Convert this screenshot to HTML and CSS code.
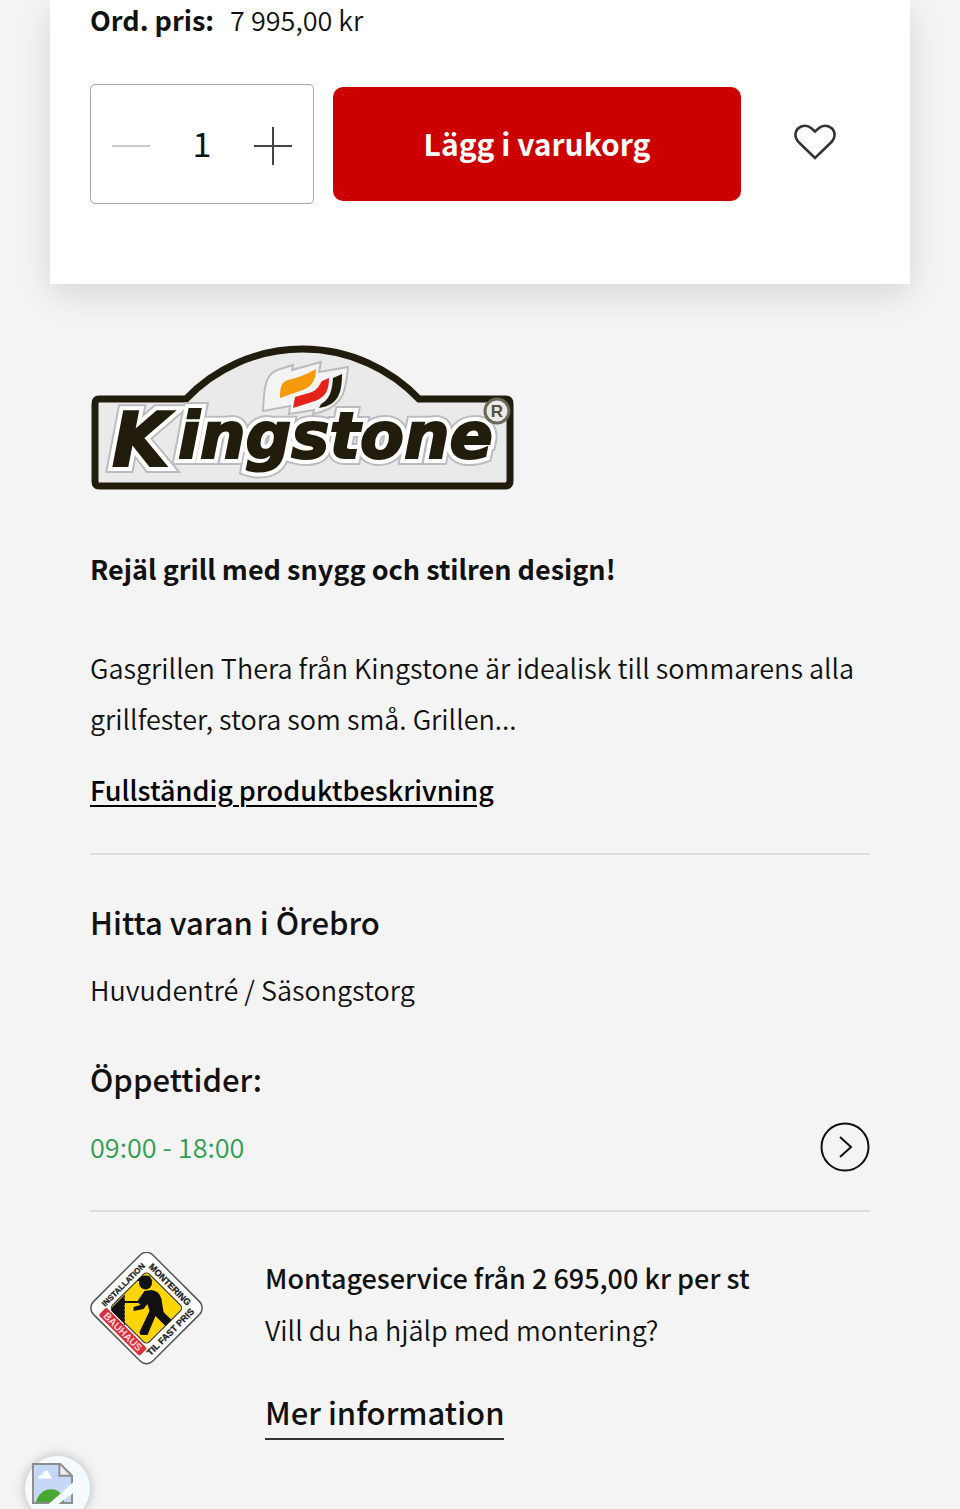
FILE: index.html
```html
<!DOCTYPE html>
<html lang="sv">
<head>
    <meta charset="UTF-8">
    <meta name="viewport" content="width=device-width, initial-scale=1.0">
    <title>Gasgrill Thera</title>
    <link rel="stylesheet" href="styles.css">
</head>
<body>
    <main class="page">
        <section class="card">
            <p class="price"><strong>Ord. pris:</strong> <span>7 995,00 kr</span></p>
            <form class="buy">
                <div class="qty">
                    <button type="button" class="qty_btn" aria-label="Minska" disabled>
                        <svg width="38" height="38" viewBox="0 0 38 38"><path d="M0 19H38"/></svg>
                    </button>
                    <input type="text" class="qty_input" value="1" aria-label="Antal">
                    <button type="button" class="qty_btn" aria-label="Öka">
                        <svg width="38" height="38" viewBox="0 0 38 38"><path d="M0 19H38M19 0V38"/></svg>
                    </button>
                </div>
                <button type="button" class="add">Lägg i varukorg</button>
                <button type="button" class="wish" aria-label="Spara som favorit">
                    <svg width="42" height="36" viewBox="0 0 42 36"><path d="M21 34L4.500 18C0.500 14 0.500 8 4 4.500C8 0.800 13.500 1 17 4L21 7.500L25 4C28.500 1 34 0.800 38 4.500C41.500 8 41.500 14 37.500 18Z"/></svg>
                </button>
            </form>
        </section>

        <section class="info">
            <!-- Kingstone -->
            <svg class="brand" width="424" height="147" viewBox="0 0 424 147" role="img" aria-label="Kingstone">
                <path d="M9 55H96A161 161 0 0 1 329 55H415Q420 55 420 60V137Q420 142 415 142H9Q5 142 5 137V60Q5 55 9 55Z" fill="#eaeaea" stroke="#211c0c" stroke-width="7"/>
                <g class="brand_name">
                    <g class="brand_edge">
                        <text x="22" y="122" class="brand_k">K</text>
                        <text x="88" y="114">ingstone</text>
                    </g>
                    <g class="brand_halo">
                        <text x="22" y="122" class="brand_k">K</text>
                        <text x="88" y="114">ingstone</text>
                    </g>
                    <g class="brand_fill">
                        <text x="22" y="122" class="brand_k">K</text>
                        <text x="88" y="114">ingstone</text>
                    </g>
                </g>
                <path d="M173 67C174 48 174 31 187 26L203 21L202 26L231 18L229 28L258 23C256 42 256 60 231 68L223 70L224 66L199 70L200 62Z" fill="#f4f4f4" stroke="#bcbcc0" stroke-width="2"/>
                <path d="M190 54C190 44 191 38 198 36Q212 33 226 25C226 38 220 44 210 47Z" fill="#f59a0b"/>
                <path d="M203 64L205 53L222 48C229 45 230 39 232 37L239 34C239 47 235 53 225 57Z" fill="#e5231b"/>
                <path d="M243 34L252 30C252 48 249 61 229 64L231 60C240 55 242 47 243 34Z" fill="#211c0c"/>
                <circle cx="407" cy="67" r="12" fill="#eaeaea" stroke="#6b6656" stroke-width="3"/>
                <text x="407" y="73" class="brand_r">R</text>
            </svg>

            <p class="lead">Rejäl grill med snygg och stilren design!</p>
            <p class="text">Gasgrillen Thera från Kingstone är idealisk till sommarens alla grillfester, stora som små. Grillen...</p>
            <a href="#" class="more">Fullständig produktbeskrivning</a>
        </section>

        <section class="store">
            <h2>Hitta varan i Örebro</h2>
            <p>Huvudentré / Säsongstorg</p>
            <h2>Öppettider:</h2>
            <div class="hours">
                <p class="open">09:00 - 18:00</p>
                <button type="button" class="arrow" aria-label="Visa öppettider">
                    <svg width="50" height="50" viewBox="0 0 50 50"><circle cx="25" cy="25" r="23.500"/><path d="M20 15L31 25L20 35"/></svg>
                </button>
            </div>
        </section>

        <section class="service">
            <svg class="badge" width="113" height="113" viewBox="0 0 113 113" role="img" aria-label="Montering till fast pris">
                <g transform="translate(56.500 56)">
                    <rect x="-42" y="-42" width="84" height="84" rx="9" transform="rotate(45)" fill="#fff" stroke="#555" stroke-width="1.500"/>
                    <rect x="-26" y="-26" width="52" height="52" rx="4" transform="rotate(45)" fill="#ffd500" stroke="#222"/>
                    <path d="M-35 0L-22 -13V16L-35 3Z" fill="#111"/>
                    <path d="M-22 -13V20" fill="none" stroke="#222" stroke-dasharray="2 2"/>
                    <circle cx="-1" cy="-25" r="6.500" fill="#111"/>
                    <path d="M-9 -27Q-5 -34 3 -32L6 -27Z" fill="#111"/>
                    <path d="M-2 -17L5 -18Q13 -17 15 -9L17 4L25 12L19 18L9 8L1 27L-6 27L-7 24L3 3L1 -4L-3 1L-13 3V-1L-6 -3L-8 -5H-24V-7H-9Z" fill="#111"/>
                    <text class="badge_text" text-anchor="middle" y="-30" transform="rotate(-45)">INSTALLATION</text>
                    <text class="badge_text badge_wide" text-anchor="middle" y="-30" transform="rotate(45)">MONTERING</text>
                    <rect x="-29" y="28" width="58" height="11" rx="2" transform="rotate(45)" fill="#d9303c"/>
                    <text class="badge_text badge_brand" text-anchor="middle" y="37" transform="rotate(45)">BAUHAUS</text>
                    <text class="badge_text badge_wide" text-anchor="middle" y="37" transform="rotate(-45)">TIL FAST PRIS</text>
                </g>
            </svg>
            <div class="service_bd">
                <p class="service_title">Montageservice från 2 695,00 kr per st</p>
                <p>Vill du ha hjälp med montering?</p>
                <a href="#" class="service_link">Mer information</a>
            </div>
        </section>
    </main>

    <button type="button" class="chat" aria-label="Chatt">
        <svg width="41" height="41" viewBox="0 0 42 42">
            <path d="M2 2H28L40 14V40H2Z" fill="#c5d8f8"/>
            <path d="M6 16Q7 12 11 12Q12 7 16 8Q18 12 21 16Z" fill="#fff"/>
            <path d="M4 40Q8 27 20 27Q30 27 33 40Z" fill="#46a832"/>
            <path d="M28 2V13H40" fill="#eee" stroke="#8d8d8d" stroke-width="2"/>
            <path d="M1 1H29L41 13V41H1Z" fill="none" stroke="#8d8d8d" stroke-width="2"/>
            <path d="M42 20L17 42H27L42 31Z" fill="#f5faff"/>
        </svg>
    </button>
</body>
</html>
```
FILE: styles.css
```css
* {
    padding: 0;
    margin: 0;
    box-sizing: border-box;
}
body {
    background-color: #f4f4f4;
    color: #111;
    font-family: "Noto Sans CJK SC", "Noto Sans", sans-serif;
    font-size: 27px;
    font-weight: 350;
    line-height: 50px;
    overflow-x: hidden;
}
button, input {
    font: inherit;
    color: inherit;
    border: 0;
    background: none;
}
button {
    cursor: pointer;
}
svg {
    display: block;
}
.page {
    padding: 0 50px 64px;
}

.card {
    background-color: #fff;
    padding: 0 40px 80px;
    box-shadow: 0 10px 32px rgba(0, 0, 0, 0.12);
}
.price {
    line-height: 40px;
    padding-bottom: 44px;
}
.price strong {
    font-weight: 700;
}
.price span {
    margin-left: 10px;
}
.buy {
    display: flex;
    align-items: center;
    gap: 19px;
}
.qty {
    display: flex;
    align-items: center;
    width: 224px;
    height: 120px;
    padding: 0 21px;
    border: 1px solid #aaa;
    border-radius: 5px;
}
.qty_btn {
    flex: none;
    padding-top: 4px;
}
.qty_btn path {
    stroke: #444;
    stroke-width: 2;
}
.qty_btn:disabled path {
    stroke: #ccc;
}
.qty_input {
    flex: 1;
    min-width: 0;
    padding-bottom: 2px;
    font-size: 34px;
    font-weight: 400;
    text-align: center;
}
.add {
    flex: 1;
    height: 114px;
    padding-bottom: 2px;
    border-radius: 10px;
    background-color: #c00;
    color: #fff;
    font-size: 30px;
    font-weight: 700;
}
.wish {
    display: flex;
    align-items: center;
    justify-content: center;
    width: 110px;
    height: 114px;
    padding-bottom: 4px;
}
.wish path {
    fill: none;
    stroke: #333;
    stroke-width: 2.5;
}

.info {
    margin: 0 40px;
    padding: 60px 0 43px;
    border-bottom: 2px solid #ddd;
}
.brand_name {
    font-family: "DejaVu Sans", sans-serif;
    font-size: 64px;
    font-style: italic;
    font-weight: 700;
    fill: #211c0c;
}
.brand_k {
    font-size: 74px;
}
.brand_edge {
    stroke: #bcbcc0;
    stroke-width: 14;
}
.brand_halo {
    fill: #fff;
    stroke: #fff;
    stroke-width: 10;
}
.brand_fill {
    stroke: #211c0c;
    stroke-width: 2;
}
.brand_r {
    font-family: "Liberation Sans", sans-serif;
    font-size: 17px;
    font-weight: 700;
    text-anchor: middle;
    fill: #55503f;
}
.lead {
    padding-top: 53px;
    font-weight: 700;
}
.text {
    padding: 48px 0 26px;
    line-height: 51px;
}
.more {
    display: block;
    line-height: 40px;
    color: #000;
    font-weight: 500;
    text-decoration: underline;
    text-decoration-thickness: 2px;
    text-underline-offset: 4px;
}

.store {
    margin: 0 40px;
    padding: 42px 0 38px;
    border-bottom: 2px solid #ddd;
}
.store h2 {
    font-size: 31px;
    font-weight: 500;
}
.store p {
    padding: 18px 0 39px;
}
.store .open {
    padding: 0;
    color: #2e9e4f;
}
.hours {
    display: flex;
    align-items: center;
    justify-content: space-between;
    padding-top: 18px;
}
.arrow svg {
    fill: none;
    stroke: #111;
    stroke-width: 2;
}

.service {
    display: flex;
    gap: 62px;
    margin: 0 40px;
    padding-top: 40px;
}
.badge {
    flex: none;
}
.badge_text {
    font-family: "Liberation Sans Narrow", "Liberation Sans", sans-serif;
    font-size: 8px;
    font-weight: 700;
    fill: #222;
    stroke: #222;
    stroke-width: 0.3;
}
.badge_wide {
    font-size: 9px;
}
.badge_brand {
    font-size: 10px;
    fill: #fbd5d8;
    stroke: none;
}
.service_bd {
    line-height: 52px;
}
.service_title {
    font-weight: 500;
}
.service_link {
    display: inline-block;
    margin-top: 30px;
    border-bottom: 2px solid #333;
    color: #111;
    font-size: 31px;
    font-weight: 500;
    text-decoration: none;
}

/* hangs over the bottom edge of the window */
.chat {
    position: fixed;
    left: 25px;
    bottom: -12px;
    display: flex;
    width: 65px;
    height: 65px;
    padding: 7px;
    border-radius: 50%;
    background-color: #f5faff;
    box-shadow: 0 0 12px rgba(0, 0, 0, 0.25);
}
```
